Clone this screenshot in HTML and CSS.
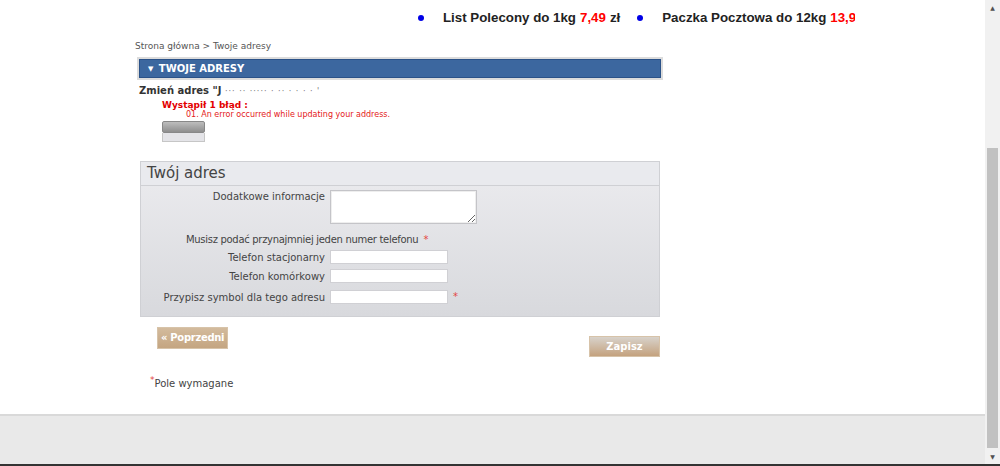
FILE: index.html
```html
<!DOCTYPE html>
<html lang="pl">

<head>
    <meta charset="UTF-8">
    <title>Twoje adresy</title>
    <link rel="stylesheet" href="styles.css">
</head>

<body>
    <div class="viewport">
        <div class="page">
            <!-- pasek promocji -->
            <div class="promo">
                <ul class="promo-list">
                    <li>List Polecony do 1kg <span class="price">7,49</span> zł</li>
                    <li>Paczka Pocztowa do 12kg <span class="price">13,9</span></li>
                </ul>
            </div>

            <div class="content">
                <div class="breadcrumb">Strona główna &gt; Twoje adresy</div>

                <div class="box-head"><span class="arrow">&#9660;</span> TWOJE ADRESY</div>

                <h2 class="edit-title">Zmień adres "J <span class="dots">··· ·· ····· · ·· · ·  · · '</span></h2>

                <div class="errors">
                    <p class="errors-title">Wystąpił 1 błąd :</p>
                    <p class="errors-item">01. An error occurred while updating your address.</p>
                    <div class="ghost-btn"><span class="ghost-top"></span><span class="ghost-bottom"></span></div>
                </div>

                <form class="address-form">
                    <fieldset class="fieldset">
                        <h3 class="fieldset-title">Twój adres</h3>
                        <div class="fields">
                            <div class="row row-area">
                                <label class="label">Dodatkowe informacje</label>
                                <textarea class="textarea"></textarea>
                            </div>
                            <div class="row row-note">
                                <span class="note">Musisz podać przynajmniej jeden numer telefonu</span>
                                <sup class="req">*</sup>
                            </div>
                            <div class="row">
                                <label class="label">Telefon stacjonarny</label>
                                <input class="input" type="text">
                            </div>
                            <div class="row">
                                <label class="label">Telefon komórkowy</label>
                                <input class="input" type="text">
                            </div>
                            <div class="row row-last">
                                <label class="label">Przypisz symbol dla tego adresu</label>
                                <input class="input" type="text">
                                <sup class="req">*</sup>
                            </div>
                        </div>
                    </fieldset>

                    <div class="actions">
                        <a class="btn btn-back" href="#">&laquo; Poprzedni</a>
                        <button class="btn btn-save" type="button">Zapisz</button>
                    </div>
                </form>

                <p class="required-note"><span class="req">*</span>Pole wymagane</p>
            </div>

            <div class="footer"></div>
        </div>

        <!-- pasek przewijania -->
        <div class="scrollbar">
            <span class="scroll-arrow">&#9650;</span>
            <div class="scroll-track"><div class="scroll-thumb"></div></div>
            <span class="scroll-arrow">&#9660;</span>
        </div>
    </div>
    <div class="bottom-line"></div>
</body>

</html>
```

FILE: styles.css
```css
/* podstawy */
html,
body {
    margin: 0;
    height: 466px;
    overflow: hidden;
}

body {
    font-family: "DejaVu Sans", Verdana, sans-serif;
    color: #444;
    background: #fff;
    display: flex;
    flex-direction: column;
}

.viewport {
    display: flex;
    height: 464px;
}

.page {
    flex: 1;
    display: flex;
    flex-direction: column;
    background: #fff;
}

/* pasek promocji */
.promo {
    height: 35px;
    display: flex;
    align-items: center;
}

.promo-list {
    margin: 0 0 0 415px;
    padding: 0;
    list-style: none;
    width: 440px;
    overflow: hidden;
    white-space: nowrap;
    display: flex;
    gap: 14px;
    font-family: "Liberation Sans", Arial, sans-serif;
    font-weight: bold;
    font-size: 13.3px;
    color: #222;
}

.promo-list li {
    display: flex;
    align-items: center;
}

.promo-list li::before {
    content: '';
    width: 6px;
    height: 6px;
    border-radius: 50%;
    background: #0000e6;
    margin: 0 19px 0 3px;
}

.promo-list .price {
    color: #ff0000;
    margin: 0 4px;
}

/* zawartość */
.content {
    width: 530px;
    margin-left: 135px;
    flex: 1;
}

.breadcrumb {
    font-size: 9px;
    color: #555;
    margin-top: 5px;
    line-height: 12px;
}

.box-head {
    margin: 5px 0 0 2px;
    width: 513px;
    height: 19px;
    line-height: 19px;
    background: #3c679f;
    border: 2px solid #dcdcdc;
    outline: 1px solid #2b5288;
    outline-offset: -3px;
    color: #fff;
    font-weight: bold;
    font-size: 10px;
    padding-left: 9px;
}

.box-head .arrow {
    font-size: 7px;
    margin-right: 2px;
    vertical-align: 1px;
}

.edit-title {
    margin: 4px 0 0 4px;
    font-size: 10px;
    font-weight: bold;
    color: #333;
    line-height: 13px;
}

.edit-title .dots {
    font-weight: normal;
    color: #777;
    font-size: 8px;
    letter-spacing: 1px;
}

.errors {
    margin: 2px 0 0 27px;
    color: #e30000;
}

.errors p {
    margin: 0;
    line-height: 10px;
}

.errors-title {
    font-weight: bold;
    font-size: 9px;
}

.errors-item {
    font-size: 8px;
    padding-left: 24px;
    color: #e42020;
}

.ghost-btn {
    margin-top: 1px;
    width: 43px;
    display: flex;
    flex-direction: column;
}

.ghost-top {
    height: 10px;
    background: linear-gradient(#bdbdbd, #8e8e8e);
    border: 1px solid #888;
    border-radius: 2px;
}

.ghost-bottom {
    height: 8px;
    background: #e4e4e8;
    border: 1px solid #c6c6c6;
    border-top: none;
}

/* formularz */
.address-form {
    margin: 19px 0 0 5px;
}

.fieldset {
    margin: 0;
    padding: 0;
    width: 518px;
    border: 1px solid #cfd0d4;
    background: linear-gradient(#ececef, #d8d9dd);
}

.fieldset-title {
    margin: 0;
    height: 23px;
    line-height: 23px;
    padding-left: 6px;
    font-size: 15px;
    font-weight: normal;
    color: #444;
    background: #e9eaee;
    border-bottom: 1px solid #cfd0d4;
}

.fields {
    padding: 4px 0 12px;
}

.row {
    display: flex;
    align-items: center;
    margin-top: 5px;
}

.row-area {
    align-items: flex-start;
    margin-top: 0;
}

.row-last {
    margin-top: 7px;
}

.label {
    width: 184px;
    text-align: right;
    font-size: 10px;
    color: #444;
    padding-right: 5px;
}

.row-area .label {
    padding-top: 1px;
}

.textarea {
    width: 145px;
    height: 32px;
    margin: 0;
    padding: 0;
    border: 1px solid #c4c4c8;
    background: #fff;
    box-shadow: inset 0 0 0 1px #eee;
}

.row-note {
    margin-top: 10px;
    margin-left: 45px;
}

.note {
    font-size: 10px;
    color: #444;
    letter-spacing: -0.3px;
}

.req {
    color: #e34444;
    font-size: 10px;
    line-height: 0;
    margin-left: 5px;
}

.input {
    width: 116px;
    height: 12px;
    margin: 0;
    padding: 0;
    border: 1px solid #d0d0d4;
    background: #fff;
}

/* przyciski */
.actions {
    display: flex;
    justify-content: space-between;
    align-items: flex-start;
    width: 520px;
    margin-top: 10px;
    padding-left: 17px;
    box-sizing: border-box;
}

.btn {
    display: inline-block;
    font-family: "DejaVu Sans", Verdana, sans-serif;
    font-weight: bold;
    font-size: 10px;
    color: #fff;
    text-decoration: none;
    border: 1px solid #d7c3a9;
    background: linear-gradient(#d3bb9d, #c4a581);
    cursor: pointer;
}

.btn-back {
    padding: 4px 3px 5px;
    line-height: 11px;
    letter-spacing: -0.3px;
}

.btn-save {
    margin-top: 9px;
    width: 71px;
    height: 21px;
    padding: 0;
    background: linear-gradient(#d8d2cb, #c4a27e);
}

.required-note {
    margin: 21px 0 0 15px;
    font-size: 10px;
    color: #444;
}

.required-note .req {
    margin: 0;
    font-size: 9px;
    vertical-align: 4px;
}

/* stopka */
.footer {
    height: 48px;
    border-top: 2px solid #d9d9d9;
    background: #e9e9e9;
}

/* pasek przewijania */
.scrollbar {
    width: 15px;
    background: #f1f1f1;
    display: flex;
    flex-direction: column;
    align-items: center;
}

.scroll-arrow {
    font-size: 6px;
    color: #505050;
    height: 15px;
    line-height: 15px;
}

.scroll-track {
    flex: 1;
    width: 100%;
    display: flex;
    justify-content: center;
    padding-top: 133px;
    box-sizing: border-box;
}

.scroll-thumb {
    width: 11px;
    height: 300px;
    background: #c1c1c1;
}

.bottom-line {
    height: 2px;
    background: #333;
}
```
